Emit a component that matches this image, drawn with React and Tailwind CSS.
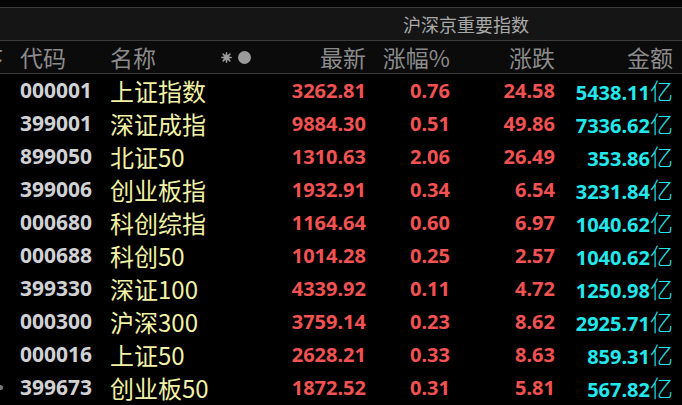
const rows = [
  ['000001', '上证指数', '3262.81', '0.76', '24.58', '5438.11'],
  ['399001', '深证成指', '9884.30', '0.51', '49.86', '7336.62'],
  ['899050', '北证50', '1310.63', '2.06', '26.49', '353.86'],
  ['399006', '创业板指', '1932.91', '0.34', '6.54', '3231.84'],
  ['000680', '科创综指', '1164.64', '0.60', '6.97', '1040.62'],
  ['000688', '科创50', '1014.28', '0.25', '2.57', '1040.62'],
  ['399330', '深证100', '4339.92', '0.11', '4.72', '1250.98'],
  ['000300', '沪深300', '3759.14', '0.23', '8.62', '2925.71'],
  ['000016', '上证50', '2628.21', '0.33', '8.63', '859.31'],
  ['399673', '创业板50', '1872.52', '0.31', '5.81', '567.82'],
];

const cjk = "font-['Noto_Sans_CJK_SC',sans-serif]";
const num = "font-['Noto_Sans','Noto_Sans_CJK_SC',sans-serif] font-bold";

function Star() {
  return (
    <svg width="11" height="11" viewBox="0 0 11 11" className="text-[#9a9a9a]">
      <g stroke="currentColor" strokeWidth="1.5" strokeLinecap="round">
        <line x1="5.5" y1="0.8" x2="5.5" y2="10.2" />
        <line x1="0.8" y1="5.5" x2="10.2" y2="5.5" />
        <line x1="2.1" y1="2.1" x2="8.9" y2="8.9" />
        <line x1="8.9" y1="2.1" x2="2.1" y2="8.9" />
      </g>
      <circle cx="5.5" cy="5.5" r="3" fill="currentColor" />
    </svg>
  );
}

export default function App() {
  return (
    <div className="w-[682px] h-[405px] overflow-hidden bg-black">
      <div className="h-[7px] bg-[#050505]" />
      <div className="h-[34px] border-y border-[#3c3c3c] bg-[#151515] flex items-center">
        <span className={`${cjk} pl-[403px] text-[18px] text-[#a9a9a9] leading-none`}>沪深京重要指数</span>
      </div>
      <div className={`${cjk} flex h-[33px] items-center border-b border-[#3a3a3a] bg-[#0b0b0b] text-[23px] leading-none text-[#8b8b8b]`}>
        <div className="w-[20px] overflow-hidden">
          <span className="-ml-[20px] block">序</span>
        </div>
        <div className="w-[90px]">代码</div>
        <div className="w-[110px]">名称</div>
        <div className="w-[146px] flex items-center justify-between">
          <div className="flex items-center gap-[6px] pl-[1px]">
            <Star />
            <span className="block h-[13px] w-[13px] rounded-full bg-[#9a9a9a]" />
          </div>
          <span>最新</span>
        </div>
        <div className="w-[84px] text-right">涨幅%</div>
        <div className="w-[105px] text-right">涨跌</div>
        <div className="w-[118px] text-right">金额</div>
      </div>
      <div>
        {rows.map((r, i) => (
          <div key={r[0]} className="flex h-[33px] items-center leading-none">
            <div className="w-[20px] flex items-center">
              {i === rows.length - 1 && <span className="block h-[5px] w-[3px] rounded-r-full bg-[#777]" />}
            </div>
            <div className={`${num} w-[90px] text-[21px] text-[#d0d2d6]`}>{r[0]}</div>
            <div className={`${cjk} w-[110px] text-[24px] text-[#f2f2a6]`}>{r[1]}</div>
            <div className={`${num} w-[146px] text-right text-[20px] text-[#f25252]`}>{r[2]}</div>
            <div className={`${num} w-[84px] text-right text-[20px] text-[#f25252]`}>{r[3]}</div>
            <div className={`${num} w-[105px] text-right text-[20px] text-[#f25252]`}>{r[4]}</div>
            <div className="w-[118px] text-right text-[#22e8ee]">
              <span className={`${num} text-[20px]`}>{r[5]}</span>
              <span className={`${cjk} text-[23px] font-light`}>亿</span>
            </div>
          </div>
        ))}
      </div>
    </div>
  );
}
